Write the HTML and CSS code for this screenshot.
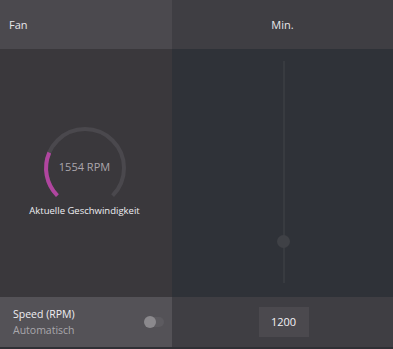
FILE: index.html
```html
<!DOCTYPE html>
<html lang="de">

<head>
  <meta charset="UTF-8">
  <title>Fan</title>
  <link rel="stylesheet" href="styles.css">
</head>

<body>
  <div class="fan">
    <div class="col col-left">
      <div class="head">Fan</div>
      <div class="body">
        <div class="gauge">
          <svg width="90" height="90" viewBox="0 0 90 90">
            <path class="arc-bg" d="M17.4 72.6 A39 39 0 1 1 72.6 72.6" />
            <path class="arc-val" d="M17.4 72.6 A39 39 0 0 1 9.3 29.6" />
          </svg>
          <span class="rpm">1554 RPM</span>
        </div>
        <div class="caption">Aktuelle Geschwindigkeit</div>
      </div>
      <div class="foot">
        <div class="labels">
          <div class="name">Speed (RPM)</div>
          <div class="sub">Automatisch</div>
        </div>
        <div class="toggle"><span class="knob"></span></div>
      </div>
    </div>
    <div class="col col-right">
      <div class="head center">Min.</div>
      <div class="body">
        <div class="slider">
          <span class="thumb"></span>
        </div>
      </div>
      <div class="foot center">
        <div class="value">1200</div>
      </div>
    </div>
  </div>
</body>

</html>
```

FILE: styles.css
```css
body {
  margin: 0;
  background-color: #2f3035;
  font-family: 'Open Sans', 'Noto Sans', Arial, sans-serif;
}

.fan {
  display: flex;
  width: 393px;
  height: 347px;
}

.col {
  display: flex;
  flex-direction: column;
}

.col-left {
  width: 172px;
}

.col-right {
  flex: 1;
}

.head {
  height: 49px;
  display: flex;
  align-items: center;
  padding-left: 9px;
  font-size: 11px;
  color: #e8e6ea;
}

.center {
  justify-content: center;
  padding-left: 0;
}

.col-left .head {
  background-color: #4b494e;
}

.col-right .head {
  background-color: #3f3e43;
}

.body {
  height: 248px;
}

.col-left .body {
  background-color: #3a383c;
  display: flex;
  flex-direction: column;
  align-items: center;
  padding-top: 74px;
  box-sizing: border-box;
}

.col-right .body {
  background-color: #2f3238;
  display: flex;
  justify-content: center;
  padding-top: 12px;
  box-sizing: border-box;
}

.gauge {
  position: relative;
  width: 90px;
  height: 90px;
  margin-left: -3px;
}

.gauge svg {
  display: block;
}

.arc-bg {
  fill: none;
  stroke: #4a484d;
  stroke-width: 4;
}

.arc-val {
  fill: none;
  stroke: #b0459f;
  stroke-width: 4;
}

.rpm {
  position: absolute;
  left: 0;
  right: 0;
  top: 36px;
  text-align: center;
  font-size: 11px;
  color: #aba6ac;
}

.caption {
  margin-top: -9px;
  font-size: 9.5px;
  color: #eeeef2;
  margin-left: -3px;
}

.slider {
  position: relative;
  width: 2px;
  height: 222px;
  background-color: #383b40;
  margin-left: 3px;
}

.thumb {
  position: absolute;
  left: -6px;
  top: 174px;
  width: 13px;
  height: 13px;
  border-radius: 50%;
  background-color: #3f4146;
}

.foot {
  height: 50px;
  display: flex;
  align-items: center;
}

.col-left .foot {
  background-color: #545257;
  padding: 0 8px 0 13px;
  justify-content: space-between;
}

.col-right .foot {
  background-color: #3f3e43;
}

.name {
  font-size: 10.5px;
  color: #f0eef2;
}

.sub {
  margin-top: 2px;
  font-size: 10.5px;
  color: #a9a7ac;
}

.toggle {
  position: relative;
  width: 19px;
  height: 10px;
  border-radius: 5px;
  background-color: #5d5b60;
}

.knob {
  position: absolute;
  left: -1px;
  top: -1px;
  width: 12px;
  height: 12px;
  border-radius: 50%;
  background-color: #8b898d;
}

.value {
  width: 50px;
  height: 30px;
  line-height: 30px;
  text-align: center;
  background-color: #4b494e;
  color: #f4f2f6;
  font-size: 11px;
  margin-left: 2px;
}
```
